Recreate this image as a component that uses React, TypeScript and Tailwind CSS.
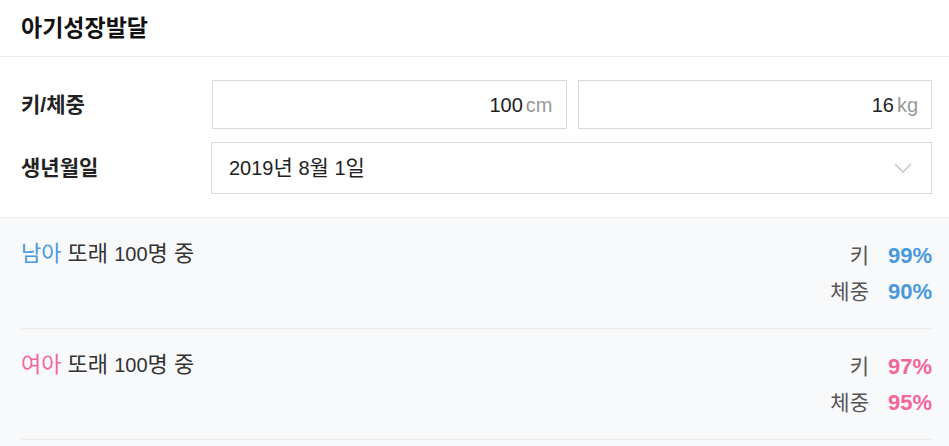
const font = { fontFamily: '"Liberation Sans", "Noto Sans CJK KR", sans-serif' };

type Stat = { label: string; value: string };

function ResultRow({
  gender,
  color,
  stats,
}: {
  gender: string;
  color: string;
  stats: Stat[];
}) {
  return (
    <div className="flex justify-between border-b border-[#ececec] pt-[22px] pb-[22px]">
      <div className="text-[22px] leading-[28px] text-[#333]">
        <span className={color}>{gender}</span> 또래 <span className="text-[20px]">100</span>명 중
      </div>
      <div className="flex flex-col gap-[8px] pt-[2px]">
        {stats.map((s) => (
          <div key={s.label} className="flex items-center justify-end gap-[19px]">
            <span className="text-[21px] leading-[28px] text-[#555]">{s.label}</span>
            <span className={`text-[22px] leading-[28px] font-bold ${color}`}>{s.value}</span>
          </div>
        ))}
      </div>
    </div>
  );
}

export default function App() {
  return (
    <div className="w-[949px] h-[446px] bg-white overflow-hidden" style={font}>
      <div className="h-[57px] border-b border-[#ececec] px-[21px] flex items-center">
        <h1 className="text-[23px] font-bold text-[#111]">아기성장발달</h1>
      </div>

      <div className="pl-[21px] pr-[17px] pt-[23px] pb-[23px] border-b border-[#ececec] flex flex-col gap-[13px]">
        <div className="flex items-center">
          <label className="w-[191px] text-[21px] font-bold text-[#222]">키/체중</label>
          <div className="flex-1 flex gap-[11px]">
            <div className="flex-1 h-[49px] border border-[#d9d9d9] flex items-center justify-end pr-[13px]">
              <span className="text-[20px] text-[#222]">100</span>
              <span className="text-[20px] text-[#999] ml-[3px]">cm</span>
            </div>
            <div className="flex-1 h-[49px] border border-[#d9d9d9] flex items-center justify-end pr-[13px]">
              <span className="text-[20px] text-[#222]">16</span>
              <span className="text-[20px] text-[#999] ml-[3px]">kg</span>
            </div>
          </div>
        </div>
        <div className="flex items-center">
          <label className="w-[190px] text-[21px] font-bold text-[#222]">생년월일</label>
          <div className="flex-1 h-[52px] border border-[#d9d9d9] flex items-center justify-between pl-[17px] pr-[19px]">
            <span className="text-[20px] text-[#222]">
              2019<span className="text-[21px]">년</span> 8<span className="text-[21px]">월</span> 1
              <span className="text-[21px]">일</span>
            </span>
            <svg width="18" height="10" viewBox="0 0 18 10" fill="none">
              <polyline points="1,1 9,9 17,1" stroke="#c8c8c8" strokeWidth="1.6" />
            </svg>
          </div>
        </div>
      </div>

      <div className="bg-[#f8f9fb] pl-[21px] pr-[17px] h-full">
        <ResultRow
          gender="남아"
          color="text-[#4a98dd]"
          stats={[
            { label: '키', value: '99%' },
            { label: '체중', value: '90%' },
          ]}
        />
        <ResultRow
          gender="여아"
          color="text-[#f2679a]"
          stats={[
            { label: '키', value: '97%' },
            { label: '체중', value: '95%' },
          ]}
        />
      </div>
    </div>
  );
}
